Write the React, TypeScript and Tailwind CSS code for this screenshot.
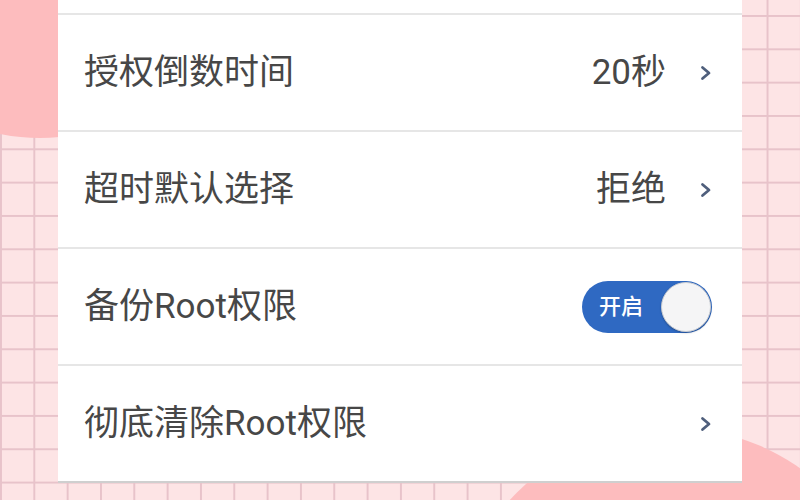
type Row = {
  label: string;
  value?: string;
  toggle?: boolean;
};

const rows: Row[] = [
  { label: "授权倒数时间", value: "20秒" },
  { label: "超时默认选择", value: "拒绝" },
  { label: "备份Root权限", toggle: true },
  { label: "彻底清除Root权限", value: "" },
];

function Chevron() {
  return (
    <svg width="12" height="16" viewBox="0 0 12 16" className="ml-[34px]">
      <polyline
        points="2.5,2.5 9,8 2.5,13.5"
        fill="none"
        stroke="#4f5f7c"
        strokeWidth="2.8"
        strokeLinecap="round"
        strokeLinejoin="round"
      />
    </svg>
  );
}

function Toggle() {
  return (
    <div className="flex h-[52px] w-[130px] items-center rounded-full bg-[#2f69c2] pl-[17px] pr-[1px]">
      <span className="flex-1 text-[22px] font-medium leading-none text-white">
        开启
      </span>
      <span className="h-[50px] w-[50px] rounded-full border border-[#c9ccd2] bg-[#f5f5f6] shadow-[0_1px_2px_rgba(0,0,0,0.25)]" />
    </div>
  );
}

function SettingRow({ row }: { row: Row }) {
  return (
    <div className="flex h-[117px] items-center border-t-2 border-[#e6e6e6] pl-[26px] pr-[30px]">
      <span className="flex-1 text-[35px] leading-none text-[#474747]">
        {row.label}
      </span>
      {row.toggle ? (
        <Toggle />
      ) : (
        <>
          <span className="text-[35px] leading-none text-[#474747]">
            {row.value}
          </span>
          <Chevron />
        </>
      )}
    </div>
  );
}

export default function App() {
  return (
    <div
      className="relative h-[500px] w-[800px] overflow-hidden bg-[#fde4e5] bg-[linear-gradient(to_right,#e8c3ca_1.5px,transparent_1.5px),linear-gradient(to_bottom,#e8c3ca_1.5px,transparent_1.5px)] bg-[length:33.33px_33.33px] bg-[position:0px_15px]"
      style={{ fontFamily: 'Roboto, "Noto Sans CJK SC", sans-serif' }}
    >
      {/* pink blobs behind the panel */}
      <div className="absolute left-[-158px] top-[-258px] h-[396px] w-[396px] rounded-full bg-[#fdbcbe]" />
      <div className="absolute left-[452px] top-[428px] h-[442px] w-[442px] rounded-full bg-[#fdbcbe]" />

      <div className="relative ml-[58px] flex w-[684px] flex-col border-b-2 border-[#cfcfcf] bg-white">
        <div className="h-[13px]" />
        {rows.map((row) => (
          <SettingRow key={row.label} row={row} />
        ))}
      </div>
    </div>
  );
}
